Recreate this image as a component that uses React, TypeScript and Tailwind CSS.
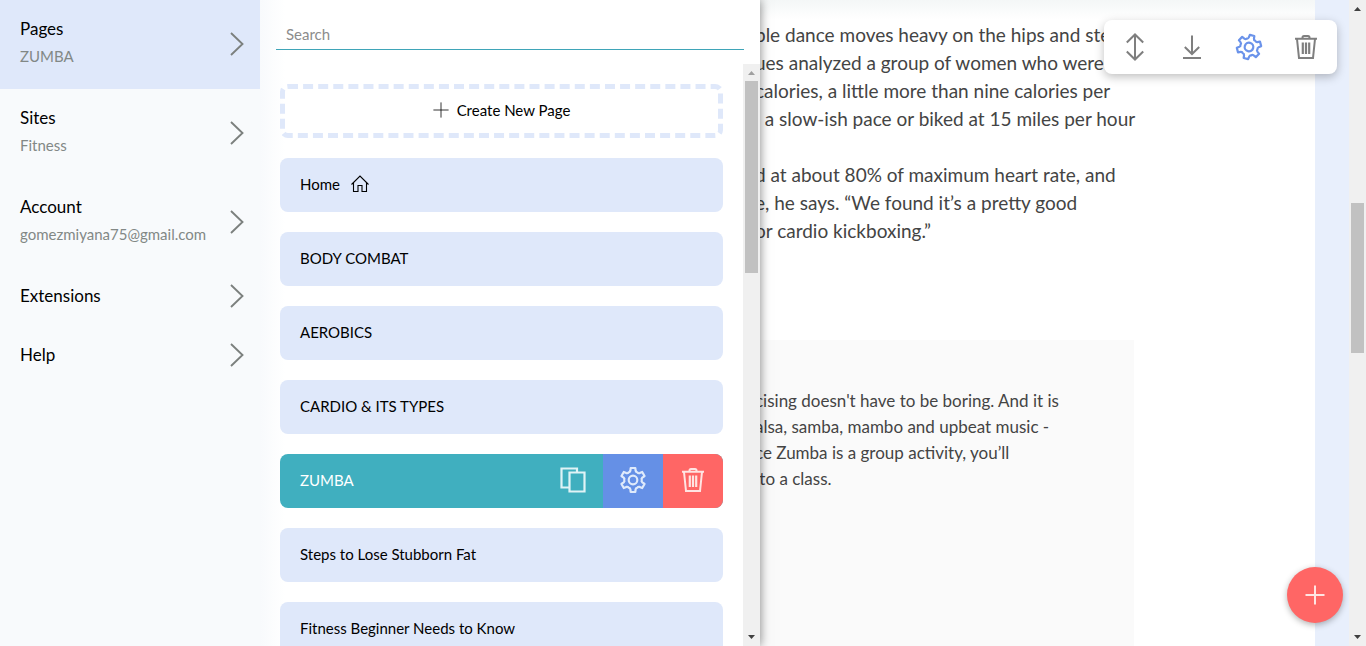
import React from "react";

type IconProps = { className?: string };

const gearPath = (() => {
  const points: string[] = [];
  const at = (r: number, deg: number) => {
    const a = ((deg - 90) * Math.PI) / 180;
    return `${(14 + r * Math.cos(a)).toFixed(2)} ${(14 + r * Math.sin(a)).toFixed(2)}`;
  };
  for (let k = 0; k < 6; k++) {
    const a = k * 60;
    points.push(`${k ? "L" : "M"}${at(12.2, a - 11)}`, `L${at(12.2, a + 11)}`, `L${at(9.6, a + 16)}`, `Q${at(8.2, a + 21)} ${at(8.8, a + 30)}`, `Q${at(8.2, a + 39)} ${at(9.6, a + 44)}`);
  }
  return points.join(" ") + " Z";
})();

function Gear({ className }: IconProps) {
  return (
    <svg viewBox="0 0 28 28" className={className} fill="none" stroke="currentColor" strokeWidth="2.2" strokeLinejoin="round" aria-hidden="true">
      <path d={gearPath} />
      <circle cx="14" cy="14" r="4.3" />
    </svg>
  );
}

function Trash({ className }: IconProps) {
  return (
    <svg viewBox="0 0 28 28" className={className} fill="none" stroke="currentColor" strokeWidth="2" aria-hidden="true">
      <path d="M3 5.800H25M5 6L7 25H21L23 6M10.500 5.500V4.500Q10.500 3 12 3H16Q17.500 3 17.500 4.500V5.500" />
      <path d="M10.800 9.500V21M14 9.500V21M17.200 9.500V21" strokeWidth="2.2" />
    </svg>
  );
}

function Copy({ className }: IconProps) {
  return (
    <svg viewBox="0 0 28 28" className={className} fill="none" stroke="currentColor" strokeWidth="2.2" aria-hidden="true">
      <path d="M10 21.500H2.500V2.500H18V6.500M10.500 6.500H25.500V25.500H10.500Z" />
    </svg>
  );
}

function MoveVertical({ className }: IconProps) {
  return (
    <svg viewBox="0 0 28 28" className={className} fill="none" stroke="currentColor" strokeWidth="2" aria-hidden="true">
      <path d="M14 1.500V26.500M5.800 9.500L14 1.500L22.200 9.500M5.800 18.500L14 26.500L22.200 18.500" />
    </svg>
  );
}

function Download({ className }: IconProps) {
  return (
    <svg viewBox="0 0 28 28" className={className} fill="none" stroke="currentColor" strokeWidth="2" aria-hidden="true">
      <path d="M14 2.500V21M6.800 14L14 21L21.200 14M5 25H23" />
    </svg>
  );
}

function House({ className }: IconProps) {
  return (
    <svg viewBox="0 0 20 20" className={className} fill="none" stroke="currentColor" strokeWidth="1.100" aria-hidden="true">
      <path d="M1.500 10.500L10 2L18.500 10.500M3.500 8.800V17.500H8V11.500H12V17.500H16.500V8.800" />
    </svg>
  );
}

function Plus({ className }: IconProps) {
  return (
    <svg viewBox="0 0 20 20" className={className} fill="none" stroke="currentColor" aria-hidden="true">
      <path d="M10 0.500V19.500M0.500 10H19.500" />
    </svg>
  );
}

function Chevron({ className }: IconProps) {
  return (
    <svg viewBox="0 0 14 24" className={className} fill="none" stroke="currentColor" strokeWidth="1.900" aria-hidden="true">
      <path d="M1 1L12.500 12L1 23" />
    </svg>
  );
}

function ScrollTrack({ thumb, muted }: { thumb: string; muted?: boolean }) {
  return (
    <div className="flex w-[17px] shrink-0 flex-col items-center justify-between bg-[#f0f0f0]" aria-hidden="true">
      <svg viewBox="0 0 15 17" className={muted ? "h-[17px] w-[15px] shrink-0 text-[#a0a0a0]" : "h-[17px] w-[15px] shrink-0 text-[#404040]"} fill="currentColor">
        <path d="M4 11L7.500 7L11 11Z" />
      </svg>
      <div className="flex w-full flex-1 flex-col items-center">
        <div className={thumb} />
      </div>
      <svg viewBox="0 0 15 17" className="h-[17px] w-[15px] shrink-0 text-[#404040]" fill="currentColor">
        <path d="M4 6L7.500 10L11 6Z" />
      </svg>
    </div>
  );
}

const sections = [
  { title: "Pages", detail: "ZUMBA", active: true },
  { title: "Sites", detail: "Fitness" },
  { title: "Account", detail: "gomezmiyana75@gmail.com" },
  { title: "Extensions" },
  { title: "Help" },
];

const pages = ["Home", "BODY COMBAT", "AEROBICS", "CARDIO & ITS TYPES", "ZUMBA", "Steps to Lose Stubborn Fat", "Fitness Beginner Needs to Know"];

const story = [
  "ble dance moves heavy on the hips and steps",
  "ues analyzed a group of women who were",
  "calories, a little more than nine calories per",
  "  a slow-ish pace or biked at 15 miles per hour",
  " ",
  "d at about 80% of maximum heart rate, and",
  "e, he says. “We found it’s a pretty good",
  "or cardio kickboxing.”",
];

const aside = [
  "cising doesn't have to be boring. And it is",
  "alsa, samba, mambo and upbeat music -",
  "ce Zumba is a group activity, you’ll",
  " to a class.",
];

function PageRow({ name }: { name: string }) {
  if (name === "ZUMBA") {
    return (
      <li className="flex h-[54px] shrink-0 overflow-hidden rounded-lg bg-[#40afbf] text-white">
        <a href="#zumba" className="flex flex-1 items-center px-5 pb-0.5">{name}</a>
        <button type="button" aria-label="Duplicate page" className="flex w-[60px] items-center justify-center pb-0.5 text-[#e0f3f6]">
          <Copy className="size-7" />
        </button>
        <button type="button" aria-label="Page settings" className="flex w-[60px] items-center justify-center bg-[#6590e6] pb-0.5 text-[#dfeafb]">
          <Gear className="size-7" />
        </button>
        <button type="button" aria-label="Delete page" className="flex w-[60px] items-center justify-center bg-[#ff6665] pb-0.5 text-[#ffe4e2]">
          <Trash className="size-7" />
        </button>
      </li>
    );
  }
  return (
    <li className="flex h-[54px] shrink-0 rounded-lg bg-[#dfe8fa]">
      <a href="#page" className="flex flex-1 items-center gap-2.5 px-5 pb-0.5">
        {name}
        {name === "Home" && <House className="size-5" />}
      </a>
    </li>
  );
}

export default function App() {
  return (
    <div className="relative flex h-screen overflow-hidden bg-white font-['Lato',sans-serif] text-[15px] text-black">
      <div className="z-10 flex w-[760px] shrink-0 bg-white shadow-[0_0_10px_rgba(0,0,0,0.5)]">
        <nav className="w-[260px] shrink-0 bg-[#f8fafc]">
          {sections.map((s) => (
            <a
              key={s.title}
              href="#section"
              className={s.active ? "flex items-center justify-between bg-[#dfe8fa] pr-4 pb-px pl-5" : "flex items-center justify-between pr-4 pb-px pl-5"}
            >
              <span className={s.detail ? "flex flex-col pt-[15px] pb-[19px]" : "flex flex-col py-[15px]"}>
                <span className="text-[17px] leading-7">{s.title}</span>
                {s.detail && <span className="leading-[26px] text-[#828886]">{s.detail}</span>}
              </span>
              <Chevron className="h-6 w-3.5 shrink-0 text-[#7c807e]" />
            </a>
          ))}
        </nav>

        <section className="flex min-w-0 flex-1 flex-col bg-linear-to-r from-[#f8fafc] to-white to-5%">
          <div className="h-16 shrink-0 px-4 pt-5">
            <div className="flex h-[30px] border-b border-[#3fa5b8]">
              <input
                type="text"
                aria-label="Search"
                placeholder="Search"
                className="w-full bg-transparent px-2.5 pb-px outline-none placeholder:text-[#8c8c8c]"
              />
            </div>
          </div>
          <div className="flex min-h-0 flex-1">
            <div className="flex flex-1 flex-col gap-5 overflow-hidden px-5 pt-5">
              <button type="button" className="flex h-[54px] shrink-0 items-center justify-center gap-2 rounded-lg border-[5px] border-dashed border-[#dfe8fa] pb-0.5">
                <Plus className="size-4" />
                Create New Page
              </button>
              <ul className="flex flex-col gap-5">
                {pages.map((p) => (
                  <PageRow key={p} name={p} />
                ))}
              </ul>
            </div>
            <ScrollTrack muted thumb="h-48 w-[13px] bg-[#c1c1c1]" />
          </div>
        </section>
      </div>

      <main className="-ml-[5px] flex min-w-0 flex-1 flex-col bg-linear-to-b from-[#f4f7f7] to-white to-3% whitespace-pre text-[#444444]">
        <div className="h-[340px] shrink-0 pt-[21px] text-[19px] leading-7">
          {story.map((line, i) => (
            <p key={i}>{line}</p>
          ))}
        </div>
        <div className="mr-[181px] flex-1 bg-[#fafafa] pt-12 text-[17px] leading-[26px]">
          {aside.map((line) => (
            <p key={line}>{line}</p>
          ))}
        </div>
      </main>
      <div className="w-[34px] shrink-0 bg-[#e8effc]" />
      <ScrollTrack thumb="mt-[186px] h-[150px] w-[13px] bg-[#c1c1c1]" />

      <div className="absolute top-5 right-[29px] z-20 flex h-[54px] w-[233px] items-center justify-between rounded-lg bg-white px-[17px] text-[#7f7f7f] shadow-[0_3px_10px_rgba(0,0,0,0.25)]">
        <button type="button" aria-label="Move section"><MoveVertical className="size-7" /></button>
        <button type="button" aria-label="Save section"><Download className="size-7" /></button>
        <button type="button" aria-label="Section settings" className="text-[#6b93ea]"><Gear className="size-7 rotate-15" /></button>
        <button type="button" aria-label="Delete section"><Trash className="size-7" /></button>
      </div>

      <button type="button" aria-label="Add section" className="absolute right-[23px] bottom-[23px] z-20 flex size-14 items-center justify-center rounded-full bg-[#ff6665] text-[#ffe4e2] shadow-[0_2px_6px_rgba(0,0,0,0.3)]">
        <Plus className="size-5 stroke-2" />
      </button>
    </div>
  );
}
